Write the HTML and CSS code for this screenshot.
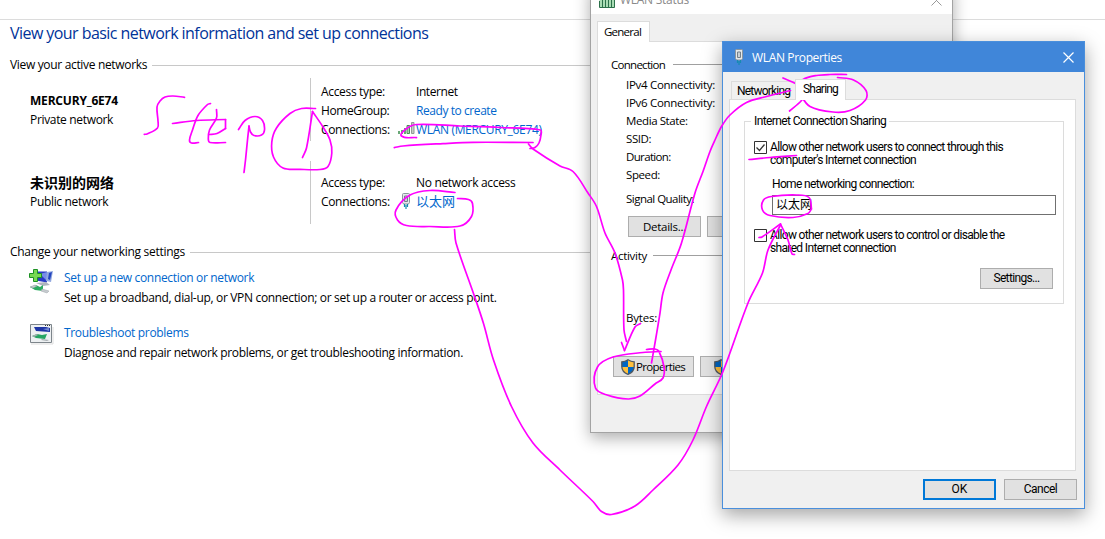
FILE: index.html
```html
<!DOCTYPE html>
<html lang="en">
<head>
<meta charset="utf-8">
<title>Network and Sharing Center</title>
<link rel="stylesheet" href="styles.css">
</head>
<body>
<svg class="defs" aria-hidden="true">
  <symbol id="shield" viewBox="0 0 14 16">
    <path d="M7 .8C5 2.200 3 2.800 .8 2.800V7.500C.8 11.500 3.500 14 7 15.300C10.500 14 13.200 11.500 13.200 7.500V2.800C11 2.800 9 2.200 7 .8Z" fill="#ffc03c"/>
    <path d="M7 .8C5 2.200 3 2.800 .8 2.800V8H7ZM7 8H13.200C13.200 11.500 10.500 14 7 15.300Z" fill="#0067c5"/>
    <path d="M7 .8C5 2.200 3 2.800 .8 2.800V7.500C.8 11.500 3.500 14 7 15.300C10.500 14 13.200 11.500 13.200 7.500V2.800C11 2.800 9 2.200 7 .8Z" fill="none" stroke="#505860" stroke-width="1.300"/>
  </symbol>
  <symbol id="plug" viewBox="0 0 10 16">
    <path d="M1.500 1.500Q1.500 .5 2.500 .5H7.500Q8.500 .5 8.500 1.500V9.500L7.500 11H2.500L1.500 9.500Z" fill="#e4e8eb" stroke="#8b959d"/>
    <path d="M3.500 3V8.500H6.500V3Z" fill="#c8d0d6" stroke="#75818b"/>
    <path d="M3.500 11V14M6.500 11V14M5 12V16" stroke="#168bb0" stroke-width="1.200"/>
  </symbol>
</svg>

<main class="page">
  <div class="strip"></div>
  <h1>View your basic network information and set up connections</h1>
  <h2>View your active networks</h2>
  <section class="net first">
    <div class="who"><b>MERCURY_6E74</b><span>Private network</span></div>
    <div class="facts">
      <span>Access type:</span><i></i><span class="tight">Internet</span>
      <span class="tight">HomeGroup:</span><i></i><a class="tight">Ready to create</a>
      <span>Connections:</span>
      <svg class="bars" width="18" height="15"><path d="M1 10h2v3H1zM4 9h2v4H4zM7 7h2v6H7z" fill="#69a876"/><path d="M10 4.500h2.500v8H10z" fill="#a7d3aa" stroke="#4b8c5a"/><path d="M14.500 1.500H17v11h-2.500z" fill="#c4cac5" stroke="#929a94"/></svg>
      <a>WLAN (MERCURY_6E74)</a>
    </div>
  </section>
  <section class="net second">
    <div class="who"><b class="cjk">未识别的网络</b><span>Public network</span></div>
    <div class="facts">
      <span>Access type:</span><i></i><span>No network access</span>
      <span>Connections:</span>
      <svg class="cable" width="10" height="16"><use href="#plug"/></svg>
      <a class="cjk">以太网</a>
    </div>
  </section>
  <h2 class="change">Change your networking settings</h2>
  <section class="task">
    <svg width="26" height="25"><path d="M6 2.500h12v11l-11-2z" fill="#293cc4"/><path d="M11 5l7-2v9z" fill="#778ce8"/><path d="M18 3l6-1-2 11-5-1z" fill="#93a9df"/><path d="M20 4l3-1-2 8-2-1z" fill="#2445bf"/><path d="M7 14l10-1 4 3-7 1z" fill="#aeb4bd"/><path d="M1 18l6-2 4 2 3-2v6l-8-1z" fill="#2cac61"/><path d="M1 18l5-2 2 1-4 2zM13 20l7 2-2 2-6-2z" fill="#c7ccd0" stroke="#9da4a8" stroke-width=".5"/><path d="M4.500 .5h4v4h4v4h-4v4h-4v-4h-4v-4h4z" fill="#78d953" stroke="#1d9124"/></svg>
    <div><a>Set up a new connection or network</a><span>Set up a broadband, dial-up, or VPN connection; or set up a router or access point.</span></div>
  </section>
  <section class="task">
    <svg width="26" height="25"><path d="M1.500 .5h21v18h-21z" fill="#edf0f2" stroke="#7d858b"/><path d="M5 3h12l4 1v4l-14-1z" fill="#1e35a6"/><path d="M14 5l6-1v3z" fill="#7589d3"/><path d="M3 12l5-2 5 1 5-1-2 5-9-1z" fill="#26a563"/><path d="M3 12l5-2 1 1-4 2zM13 15l7 1-2 1-6-1z" fill="#a6adb1"/><path d="M16 1.500h5" stroke="#333" stroke-dasharray="1 1"/><path d="M2 20h22V3" fill="none" stroke="#ddd"/></svg>
    <div><a>Troubleshoot problems</a><span>Diagnose and repair network problems, or get troubleshooting information.</span></div>
  </section>
</main>

<div class="window status">
  <header><svg width="16" height="16"><path d="M0 4.500H15.500V15.500H.5V9M3.500 8v7M6.500 7v8M9.500 6v9M12.500 5v10" fill="#a9dcb4" stroke="#2c704a"/></svg><span>WLAN Status</span><svg class="x" width="11" height="11"><path d="M.5 .5l10 10M10.500 .5l-10 10" stroke="#999"/></svg></header>
  <div class="tabs"><div class="tab">General</div></div>
  <div class="sheet">
    <h3>Connection</h3>
    <ul>
      <li class="ip">IPv4 Connectivity:</li>
      <li class="ip">IPv6 Connectivity:</li>
      <li>Media State:</li>
      <li>SSID:</li>
      <li class="duration">Duration:</li>
      <li>Speed:</li>
      <li class="signal">Signal Quality:</li>
    </ul>
    <div class="row details"><div class="btn">Details...</div><div class="btn"></div></div>
    <h3 class="activity">Activity</h3>
    <p class="bytes">Bytes:</p>
    <div class="row admin"><div class="btn"><svg width="14" height="16"><use href="#shield"/></svg><span>Properties</span></div><div class="btn"><svg width="14" height="16"><use href="#shield"/></svg></div></div>
  </div>
</div>

<div class="window props">
  <header><svg width="10" height="16"><use href="#plug"/></svg><span>WLAN Properties</span><svg class="x" width="11" height="11"><path d="M.5 .5l10 10M10.500 .5l-10 10" stroke="#fff" stroke-width="1.200"/></svg></header>
  <div class="tabs"><div class="tab off">Networking</div><div class="tab">Sharing</div></div>
  <div class="sheet">
    <fieldset>
      <legend>Internet Connection Sharing</legend>
      <div class="check"><svg width="13" height="13"><path d="M.5 .5h12v12H.5z" fill="#fff" stroke="#333"/><path d="M2.500 6.500l3 3 5-6" fill="none" stroke="#333" stroke-width="1.300"/></svg><p>Allow other network users to connect through this<br>computer's Internet connection</p></div>
      <p class="home">Home networking connection:</p>
      <div class="field">以太网</div>
      <div class="check lower"><svg width="13" height="13"><path d="M.5 .5h12v12H.5z" fill="#fff" stroke="#333"/></svg><p>Allow other network users to control or disable the<br>shared Internet connection</p></div>
      <div class="btn settings">Settings...</div>
    </fieldset>
  </div>
  <footer><div class="btn ok">OK</div><div class="btn">Cancel</div></footer>
</div>

<svg class="ink" width="1105" height="539"></svg>
<script src="ink.js"></script>
</body>
</html>
```
FILE: styles.css
```css
* { box-sizing: border-box; }
body { margin: 0; width: 1105px; height: 539px; overflow: hidden; position: relative; background: #fff; color: #000; font: 12px/19px "Open Sans", "Noto Sans CJK SC", sans-serif; letter-spacing: -.33px; white-space: nowrap; }
h1, h2, h3, p, ul { margin: 0; padding: 0; font-weight: 400; list-style: none; }
svg { display: block; flex: none; }
a { color: #0066cc; }
.defs { position: absolute; width: 0; height: 0; }
.strip { height: 20px; border-bottom: 1px solid #dcdcdc; }
h1 { height: 26px; padding-left: 10px; font-size: 16px; line-height: 26px; letter-spacing: -.56px; color: #003399; }
h2 { display: flex; align-items: center; gap: 5px; width: 1075px; margin: 9px 0 3px; padding-left: 10px; font-size: 12px; line-height: 20px; }
h2::after { content: ""; flex: 1; height: 1px; background: #c8c8c8; }
.tight { letter-spacing: -.43px; }
.cjk { letter-spacing: 0; }
.net { display: flex; height: 63px; padding-left: 30px; }
.who { width: 280px; display: flex; flex-direction: column; align-items: flex-start; }
.who b { letter-spacing: -.2px; }
.first .who { padding-top: 13px; }
.facts { display: grid; grid-template-columns: 76px 19px auto; align-content: start; justify-items: start; grid-auto-rows: 19px; padding-left: 10px; border-left: 1px solid #c8c8c8; }
.first .facts { padding-top: 4px; }
.second { margin-top: 20px; }
.second .who, .second .facts { padding-top: 12px; }
.who .cjk { font-size: 14px; letter-spacing: 0; }
a.cjk { font-size: 13px; }
.bars { margin-top: 1px; }
.cable { margin: 1px 0 0 -1px; justify-self: center; }
.change { margin: 18px 0 6px; letter-spacing: -.28px; }
.task { display: flex; gap: 9px; height: 55px; padding-left: 29px; }
.task > svg { margin-top: 1px; }
.task div { display: flex; flex-direction: column; align-items: flex-start; line-height: 20px; }

.window { position: absolute; display: flex; flex-direction: column; background: #f0f0f0; }
.window header { display: flex; align-items: center; flex: none; }
.window .x { margin-left: auto; }
.tabs { display: flex; align-items: flex-end; padding-left: 6px; flex: none; }
.tab { position: relative; z-index: 1; background: #fff; border: 1px solid #dcdcdc; border-bottom: 0; margin-bottom: -1px; }
.sheet { margin: 0 6px; background: #fff; border: 1px solid #dcdcdc; }
.btn { display: flex; align-items: center; justify-content: center; height: 21px; background: #e1e1e1; border: 1px solid #adadad; }

.status { left: 590px; top: -16px; width: 363px; height: 449px; border: 1px solid #a3a3a3; box-shadow: 0 5px 15px rgba(0,0,0,.32); font-size: 11.5px; letter-spacing: -.4px; }
.status header { height: 29px; padding: 0 10px 0 8px; gap: 5px; background: #fff; color: #8a8a8a; font-size: 12px; letter-spacing: -.27px; }
.status .x { margin-top: 2px; }
.status .tabs { padding-top: 7px; }
.status .tab { width: 53px; height: 21px; padding-left: 6px; line-height: 19px; letter-spacing: -.75px; }
.status .sheet { height: 354px; padding-top: 14px; }
h3 { display: flex; align-items: center; gap: 8px; padding: 0 13px; font-size: 11.5px; line-height: 18px; letter-spacing: -.72px; }
h3::after { content: ""; flex: 1; height: 1px; margin-bottom: 2px; background: #a0a0a0; }
.status ul { padding: 2px 0 0 28px; line-height: 18px; }
.status .ip { letter-spacing: -.29px; }
.status .duration { letter-spacing: -.65px; }
.status .signal { margin-top: 6px; letter-spacing: -.52px; }
.row { display: flex; gap: 6px; }
.details { padding: 8px 0 0 30px; }
.details .btn { width: 73px; letter-spacing: -.27px; }
.activity { margin-top: 10px; gap: 6px; letter-spacing: -.3px; }
.bytes { padding: 44px 0 0 28px; line-height: 18px; letter-spacing: -.2px; }
.admin { padding: 29px 0 0 15px; letter-spacing: -.65px; }
.admin .btn { width: 81px; gap: 1px; justify-content: flex-start; padding-left: 7px; }
.admin .btn + .btn { padding-left: 13px; }

.props { left: 722px; top: 41px; width: 363px; height: 468px; border: 1px solid #4a8fdc; box-shadow: 0 6px 18px rgba(0,0,0,.36); font: 12px/13px Roboto, "Noto Sans CJK SC", sans-serif; letter-spacing: -.655px; }
.props header { height: 30px; padding: 0 10px 0 11px; gap: 8px; background: #4086d9; color: #fff; font-family: "Open Sans", sans-serif; letter-spacing: -.35px; }
.props .tabs { padding-top: 7px; }
.props .tab { height: 21px; width: 51px; line-height: 19px; padding-left: 7px; letter-spacing: -.8px; }
.props .tab.off { z-index: 0; width: 65px; height: 18px; margin-left: 2px; margin-right: -1px; padding-left: 5px; line-height: 18px; background: #f0f0f0; margin-bottom: 0; }
.props .sheet { height: 372px; margin-right: 8px; padding: 15px 11px 0 14px; }
fieldset { position: relative; min-width: 0; margin: 0; padding: 0; height: 189px; border: 1px solid #dcdcdc; }
legend { margin-left: 6px; padding: 0 3px; height: 13px; line-height: 13px; letter-spacing: -.61px; }
.check { display: flex; gap: 3px; padding: 13px 0 0 9px; }
.home { padding: 11px 0 0 27px; }
.field { margin: 4px 0 0 27px; width: 284px; height: 20px; padding-left: 3px; border: 1px solid #707070; line-height: 18px; letter-spacing: 0; background: #fff; }
.check.lower { padding-top: 14px; }
.settings { width: 73px; height: 21px; margin: 13px 10px 0 auto; }
.props footer { display: flex; justify-content: flex-end; gap: 8px; padding: 8px 7px 0; letter-spacing: -.5px; }
.props footer .btn { width: 73px; height: 21px; }
.props footer .ok { border: 2px solid #0078d7; letter-spacing: 0; }
.ink { position: absolute; left: 0; top: 0; pointer-events: none; }
.ink path { fill: none; stroke: #f0f; stroke-width: 1.700; stroke-linecap: round; stroke-linejoin: round; }
```
FILE: ink.js
```js
// Pen strokes as x,y points; each is drawn as a smooth curve through its points.
const strokes = [
  // "Step 1"
  '144.3,134.3 147,134 157.5,128 158,121 157,107 160,101 165,97 173,96 184.5,97.3',
  '172.5,123.5 196.5,120.5 225.5,119.5',
  '225.5,119.5 225.5,128.5',
  '225.5,128.5 217,133.5 209,134.5',
  '210.500,103.5 207.5,104.5 198,115.5 192.5,130 189.5,140 191.5,143 198.5,142.5',
  '216.5,109.5 216.5,118 209.5,130 208.3,139 210,142.5 225.5,142.5',
  '244,172.5 245.5,160 247.5,140 249,126',
  '249,126 250.5,132 254,135.5 261.5,135 264.5,130 262.5,120.5 255,116.5 245,120.5 238.5,129.5',
  '315.5,108.5 301.5,108.5 290,113.5 276.5,128 271.8,142 273.5,157 283,168 300,169.3 320,169.5 328,166.5 331.8,153 330,140 323,127 312.5,111.5',
  '312.5,111.5 306.5,148 302.5,157.5',
  // WLAN link to the Properties button
  '394.3,147.6 403,146 443,143.6 473,142.3 533,142.5',
  '416.5,137.6 401.5,136 406,129 416.5,124.5 460,126 500,127.5 540.5,130 541,135 539,143 535,147.5 530,148.5',
  '528.5,144 533,149 560,166 573,171.5 588,193 596.5,206.5 605,233 615,253 622.5,280 623.5,290 624,330 626.5,341.5',
  '621.5,342.5 624.5,350.5',
  '624.5,350.5 635,327 640.5,323.5',
  '661,351.5 643,352.5 613,357 597.5,367 595.5,388 607,395 628,399 640,396 655,384 663,378 664,367 659,351.5 655,349 646.5,349.5',
  // Properties button to the Sharing tab
  '651.5,363 655,343 660,313 663,293 671,270 681.5,243 695,193 703,171.5 710,151.5 715,140 721.5,126.5 730,115 746.5,102.5 766.5,96.5 790.5,90.5',
  '783,78 800,86 805,93 801.5,100.5 789.5,111',
  '846.5,74.5 830,74.5 816.5,75.5 803,79.5 798,86.5 800,93.5 810,106.5 833,112 850,110.5 865.5,100 866,90.5 853.5,80 837.5,77.5',
  '749,159.5 770,157.5 796.5,155.5',
  // Ethernet link to the home networking field
  '455,192.5 430,190.5 410,195 396,210 397.5,220 406.5,225.5 430,226.5 460,226 471.5,216.5 472.5,203.5 468.5,199.5 457.5,198.5',
  '454.5,229.5 456,243 473.5,293.5 483.5,323.5 493.5,360 511.5,406.5 533,443 560,470 593,501.5 601.5,511.5 611.5,514.5 635,506 653,490 678,465 693,440 706.5,406.5 723,371.5 748,303 762.5,273 768,250 780.5,225',
  '759,237.5 762,237 780.5,224',
  '780.5,224 788,240 792,254 794.5,254.5',
  '811.5,209 808,213.5 793,217.5 770,215.5 762.5,210 763.5,200 771.5,196.5 796.5,195 809,197.5 811.5,209',
];

const ink = document.querySelector('.ink');
for (const s of strokes) {
  const p = s.split(' ').map(v => v.split(',').map(Number));
  let d = `M${p[0]}`;
  for (let i = 0; i < p.length - 1; i++) {
    const a = p[i - 1] || p[i], b = p[i], c = p[i + 1], e = p[i + 2] || c;
    // handle length is capped by the segment, so short segments don't overshoot
    const len = Math.hypot(c[0] - b[0], c[1] - b[1]) / 3;
    const unit = (u, v) => { const l = Math.hypot(v[0] - u[0], v[1] - u[1]) || 1; return [(v[0] - u[0]) / l * len, (v[1] - u[1]) / l * len]; };
    const t = unit(a, c), r = unit(b, e);
    d += `C${b[0] + t[0]},${b[1] + t[1]} ${c[0] - r[0]},${c[1] - r[1]} ${c}`;
  }
  const path = document.createElementNS('http://www.w3.org/2000/svg', 'path');
  path.setAttribute('d', d);
  ink.append(path);
}
```
